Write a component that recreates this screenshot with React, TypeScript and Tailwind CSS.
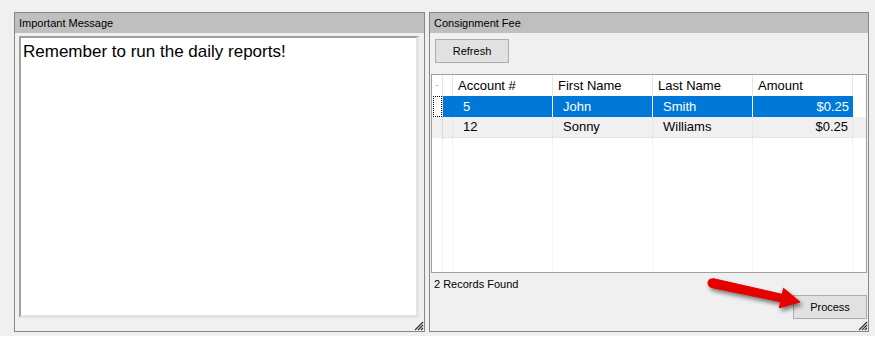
import React from "react";

const font = { fontFamily: '"Liberation Sans", Arial, sans-serif' };

const cols = [
  { key: "acct", label: "Account #", w: "w-[100px]" },
  { key: "first", label: "First Name", w: "w-[100px]" },
  { key: "last", label: "Last Name", w: "w-[100px]" },
  { key: "amt", label: "Amount", w: "w-[100px]" },
];

const rows = [
  { acct: "5", first: "John", last: "Smith", amt: "$0.25" },
  { acct: "12", first: "Sonny", last: "Williams", amt: "$0.25" },
];

const Grip = () => (
  <svg width="10" height="10" viewBox="0 0 10 10" className="absolute right-0 bottom-0">
    <path d="M9 1 L1 9 M9 4 L4 9 M9 7 L7 9" stroke="#333" strokeWidth="1.2" />
    <path d="M9 2.5 L2.5 9 M9 5.5 L5.5 9" stroke="#aaa" strokeWidth="1" />
  </svg>
);

const PanelHeader = ({ title }: { title: string }) => (
  <div className="h-[20px] bg-[#bfbfbf] pl-[4px] flex items-center text-[11px] text-black leading-none">
    {title}
  </div>
);

const WinButton = ({ children }: { children: React.ReactNode }) => (
  <div className="w-[74px] h-[24px] bg-[#e1e1e1] border border-[#adadad] flex items-center justify-center text-[11px] text-black">
    {children}
  </div>
);

const Grid = () => (
  <div className="ml-[1px] w-[436px] h-[199px] border border-[#a0a0a0] bg-white flex flex-col overflow-hidden text-[13px]">
    {/* header */}
    <div className="flex h-[21px] shrink-0 bg-white">
      <div className="w-[11px] border-r border-[#e5e5e5] flex items-center justify-center">
        <span className="text-[9px] text-[#999] leading-none">-</span>
      </div>
      <div className="w-[10px] border-r border-[#e5e5e5]" />
      {cols.map((c) => (
        <div key={c.key} className={`${c.w} border-r border-[#e5e5e5] pl-[5px] flex items-center text-black`}>
          {c.label}
        </div>
      ))}
    </div>
    {/* rows */}
    {rows.map((r, i) => {
      const sel = i === 0;
      return (
        <div key={i} className={`flex h-[21px] shrink-0 ${sel ? "bg-white" : "bg-[#f0f0f0]"}`}>
          <div className="w-[11px] border-r border-dotted border-[#c8c8c8] flex items-stretch">
            {sel && <div className="w-[10px] ml-[1px] border border-dotted border-black" />}
          </div>
          <div
            className={`flex flex-1 max-w-[410px] ${sel ? "bg-[#0078d7] text-white" : "text-black border-b border-dotted border-[#dcdcdc]"}`}
          >
            <div className={`w-[10px] ${sel ? "" : "border-r border-dotted border-[#dcdcdc]"}`} />
            {cols.map((c, j) => (
              <div
                key={c.key}
                className={`${c.w} flex items-center ${
                  sel
                    ? j < 3
                      ? "border-r border-white"
                      : ""
                    : "border-r border-dotted border-[#dcdcdc]"
                } ${c.key === "amt" ? "justify-end pr-[4px]" : "pl-[10px]"}`}
              >
                {r[c.key as keyof typeof r]}
              </div>
            ))}
          </div>
        </div>
      );
    })}
    {/* empty area */}
    <div className="flex flex-1">
      <div className="w-[11px] border-r border-dotted border-[#e6e6e6]" />
      <div className="w-[10px] border-r border-dotted border-[#ececec]" />
      {cols.map((c) => (
        <div key={c.key} className={`${c.w} border-r border-dotted border-[#ececec]`} />
      ))}
    </div>
  </div>
);

export default function App() {
  return (
    <div className="relative w-[875px] h-[336px] bg-[#f0f0f0] pt-[12px] pl-[14px] flex gap-[4px]" style={font}>
      {/* Important Message */}
      <div className="relative w-[411px] h-[320px] border border-[#868686] bg-[#f0f0f0] flex flex-col">
        <PanelHeader title="Important Message" />
        <div className="pl-[4px] pt-[3px]">
          <div className="w-[400px] h-[282px] border-t-2 border-l-2 border-[#a0a0a0] border-r-[3px] border-b-[3px] border-r-[#e3e3e3] border-b-[#e3e3e3] bg-white pl-[2px] pt-[3px]">
            <div className="text-[17px] text-black leading-[22px]">Remember to run the daily reports!</div>
          </div>
        </div>
        <Grip />
      </div>

      {/* Consignment Fee */}
      <div className="relative w-[440px] h-[320px] border border-[#868686] bg-[#f0f0f0] flex flex-col">
        <PanelHeader title="Consignment Fee" />
        <div className="pl-[5px] pt-[6px]">
          <WinButton>Refresh</WinButton>
        </div>
        <div className="pt-[11px]">
          <Grid />
        </div>
        <div className="pl-[4px] pt-[4px] text-[11px] text-black leading-[14px]">2 Records Found</div>
        <div className="flex justify-end pr-[1px] pt-[4px]">
          <WinButton>Process</WinButton>
        </div>
        <Grip />
      </div>

      {/* red arrow */}
      <svg
        width="110"
        height="45"
        viewBox="0 0 110 45"
        className="absolute left-[700px] top-[270px] drop-shadow-[2px_3px_2px_rgba(0,0,0,0.5)]"
      >
        <polygon
          points="12.95,8.6 82.2,24.3 83.5,18.2 100,32 79.3,37.8 80.6,31.7 11.05,17.4"
          fill="#e60000"
          stroke="#e60000"
          strokeWidth="1"
          strokeLinejoin="round"
        />
        <circle cx="12" cy="13" r="4.5" fill="#e60000" />
      </svg>
    </div>
  );
}
